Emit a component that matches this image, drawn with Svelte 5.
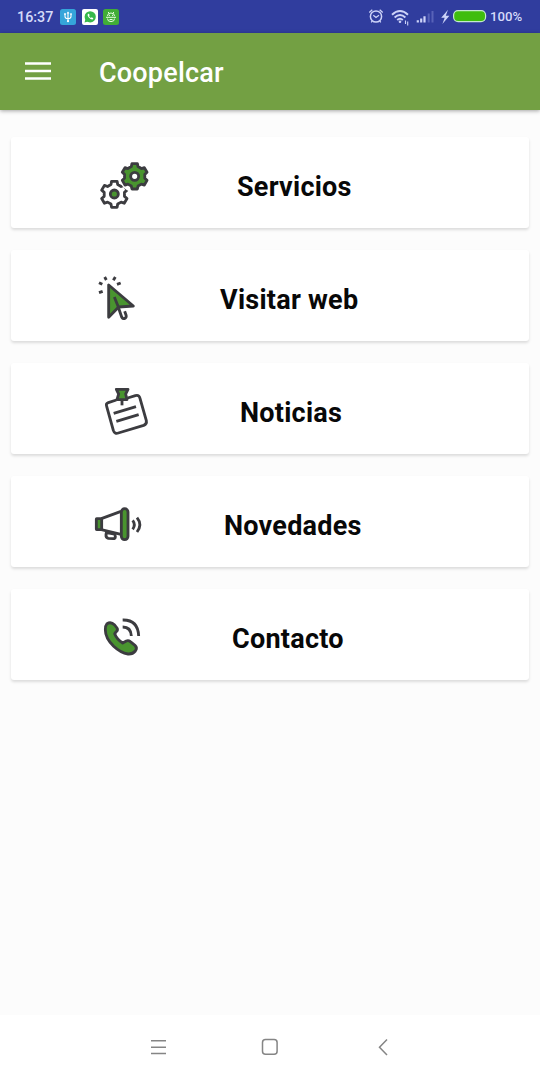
<script lang="ts">
    interface MenuItem {
        icon: string;
        label: string;
        offset: number;
    }

    const items: MenuItem[] = [
        { icon: 'gears', label: 'Servicios', offset: 72 },
        { icon: 'pointer', label: 'Visitar web', offset: 55 },
        { icon: 'note', label: 'Noticias', offset: 75 },
        { icon: 'megaphone', label: 'Novedades', offset: 59 },
        { icon: 'phone', label: 'Contacto', offset: 67 }
    ];

    // Outline of a six-toothed gear around a center point
    function gearPath(cx: number, cy: number, outer: number, inner: number) {
        const points: string[] = [];
        for (let i = 0; i < 6; i++) {
            const mid = i * 60 - 90;
            for (const [r, shift] of [[inner, -19], [outer, -12], [outer, 12], [inner, 19]]) {
                const a = ((mid + shift) * Math.PI) / 180;
                points.push(`${(cx + r * Math.cos(a)).toFixed(1)} ${(cy + r * Math.sin(a)).toFixed(1)}`);
            }
        }
        return `M${points.join('L')}Z`;
    }
</script>

<div class="screen">
    <!-- Status bar -->
    <div class="status">
        <span class="clock">16:37</span>
        <svg class="app" width="16" height="16" viewBox="0 0 16 16">
            <rect width="16" height="16" rx="2.5" fill="#35a5da" />
            <path d="M8 3.5v9M5 5v2.5q0 2 3 2.3M11 5v2.5q0 2-3 2.3" fill="none" stroke="#fff" stroke-width="1.1" />
            <path d="M6.6 4.6 8 2.6l1.4 2z" fill="#fff" />
            <circle cx="8" cy="12.2" r="1.1" fill="#fff" />
            <circle cx="5" cy="5" r=".9" fill="#fff" />
            <path d="M10.2 4.2h1.6v1.6h-1.6z" fill="#fff" />
        </svg>
        <svg class="app" width="16" height="16" viewBox="0 0 16 16">
            <rect width="16" height="16" rx="2" fill="#fff" />
            <circle cx="8.2" cy="7.8" r="5.6" fill="#36b84a" />
            <path d="m2.5 13.5 1-3.6 2.6 2.6z" fill="#36b84a" />
            <path d="M5.8 5q-.7 1.5 1 3.6 2 2.2 3.8 2l.8-1.3-1.7-1-.8.7Q7.7 8.4 7 7l.7-.7-.8-1.6z" fill="#fff" />
        </svg>
        <svg class="app" width="16" height="16" viewBox="0 0 16 16">
            <rect width="16" height="16" rx="2.5" fill="#41ad37" />
            <path d="M4.500 7q0-3 3.500-3t3.500 3M4.500 9.600q0 3 3.500 3t3.500-3M5.200 3l.8 1.300M10.800 3 10 4.300M3 8.300h10M6.500 10.500h3" fill="none" stroke="#e7ffdf" stroke-width="1" />
            <path d="M6 6.300h1M9 6.300h1" stroke="#fff" />
        </svg>
        <svg class="tray" width="120" height="33" viewBox="0 0 120 33" fill="none" stroke="#cdd3f8">
            <circle cx="11" cy="16.5" r="5.6" stroke-width="1.5" />
            <path d="m4.300 12.500 3-2.800M17.700 12.500l-3-2.800M8.300 15.200l2.700 2.200 3-2.200M7.300 21l-1.100 1.300M14.700 21l1.100 1.300" stroke-width="1.3" />
            <path d="M27 14.800q8-7.500 16 0M29.600 17.500q5.400-5 10.800 0M32.200 20q2.800-2.600 5.600 0" stroke-width="1.9" />
            <circle cx="35" cy="21.700" r="1.3" fill="#cdd3f8" stroke="none" />
            <path d="M40.500 20.500v3.500M42.700 21.500v4" stroke-width="1.1" />
            <path d="M52.800 22.500v-2.200M56.200 22.500v-4M59.500 22.500v-6.200" stroke-width="2.2" />
            <path d="M63.700 22.500v-9M67.500 22.500V11" stroke="#5863b8" stroke-width="2" />
            <path d="m83 9.800-6.800 8h3.500l-2.300 6.200 7-8.200h-3.600z" fill="#cdd3f8" stroke="none" />
            <rect x="88.600" y="10.600" width="32" height="11" rx="4.5" fill="#3fbd0d" stroke="#c5e9ce" stroke-width="1.2" />
        </svg>
        <span class="percent">100%</span>
    </div>

    <header>
        <svg width="26" height="18" viewBox="0 0 26 18">
            <path d="M0 1.500h26M0 9h26M0 16.500h26" stroke="#fff" stroke-width="2.6" />
        </svg>
        <h1>Coopelcar</h1>
    </header>

    <main>
        {#each items as item}
            <div class="card">
                {#if item.icon === 'gears'}
                    <svg class="icon" viewBox="0 3 240 210">
                        <path d={gearPath(88, 133, 40, 31)} />
                        <circle class="green" cx="88" cy="132" r="12" />
                        <circle cx="149" cy="79" r="47" fill="#fff" stroke="none" />
                        <path class="green" d={gearPath(149, 79, 39, 31)} />
                        <circle cx="149" cy="79" r="12" fill="#fff" />
                    </svg>
                {:else if item.icon === 'pointer'}
                    <svg class="icon" viewBox="0 -3 240 210">
                        <path class="green" d="M71 60v97l30-31 44-3z" />
                        <path d="m88 96 13 32M101 130l9 26q4 8 11 3 4-3 2-9l-4-11" />
                        <path d="m42 53 10 5M59 36l5 9M91 36l-6 10M107 54l-11 4M42 83l11-4" />
                    </svg>
                {:else if item.icon === 'note'}
                    <svg class="icon" viewBox="0 -3 240 210">
                        <path d="m94 66-24 8q-8 3-5 11l20 72q4 12 15 8l76-23q10-4 8-14l-19-67q-3-11-14-8l-23 7" />
                        <path d="M111 66v16" />
                        <path class="green" d="M94 34h35l-7 14 4 17H96l5-17z" />
                        <path d="m86 106 67-20M94 130l67-20" />
                    </svg>
                {:else if item.icon === 'megaphone'}
                    <svg class="icon" viewBox="0 0 240 210">
                        <path d="m49 86 59-22M49 119l59 14M64 128l-1 6q-1 9 7 11l14 1q7 0 7-6l-2-8z" />
                        <rect class="green" x="34" y="86" width="16" height="33" rx="1" />
                        <rect class="green" x="109" y="56" width="20" height="93" rx="10" />
                        <path d="M143 91q10 13 0 27M156 83q17 21 0 43" />
                    </svg>
                {:else}
                    <svg class="icon" viewBox="0 0 240 210">
                        <path class="green" d="M66 62q12-7 23 4l7 9q4 6-3 12l-4 5q6 16 24 28l11-6q6-3 12 2l14 11q8 7 1 17-8 10-22 9-22-3-43-23-25-25-25-49-1-12 5-19z" />
                        <path d="M113 51q46-1 48 48M113 72q25 0 26 27" />
                    </svg>
                {/if}
                <span class="label" style="margin-left: {item.offset}px">{item.label}</span>
            </div>
        {/each}
    </main>

    <!-- System navigation buttons -->
    <nav>
        <svg width="540" height="65" viewBox="0 0 540 65" fill="none" stroke="#858585" stroke-width="1.5">
            <path d="M151 25.800h15M151 32.300h15M151 38.600h15" />
            <rect x="262.500" y="24.600" width="14.600" height="14.600" rx="3" />
            <path d="m387 24.500-7.500 7.700 7.500 7.800" />
        </svg>
    </nav>
</div>

<style>
    :global(body) {
        margin: 0;
    }

    .screen {
        display: flex;
        flex-direction: column;
        width: 540px;
        height: 1080px;
        background: #fcfcfc;
        font-family: Roboto, sans-serif;
        overflow: hidden;
    }

    /* Status bar */
    .status {
        display: flex;
        align-items: center;
        height: 33px;
        background: #303d9e;
        color: #d5daf9;
        font-weight: 500;
    }

    .clock {
        width: 43px;
        padding-left: 17px;
        font-size: 14.3px;
    }

    .app {
        margin-right: 5.5px;
    }

    .tray {
        margin-left: 240.5px;
        overflow: visible;
    }

    .percent {
        margin-left: 5px;
        font-size: 13.2px;
    }

    /* Title bar */
    header {
        display: flex;
        align-items: center;
        height: 77px;
        padding-left: 25px;
        background: #73a043;
        box-shadow: 0 1px 4px rgba(0, 0, 0, 0.35);
    }

    header svg {
        margin-bottom: 2px;
    }

    h1 {
        margin: 3px 0 0 48px;
        color: #fff;
        font-size: 27px;
        font-weight: 500;
        letter-spacing: 0.2px;
    }

    /* Menu cards */
    main {
        display: flex;
        flex: 1;
        flex-direction: column;
        gap: 22px;
        padding: 27px 11px 0;
    }

    .card {
        display: flex;
        align-items: flex-start;
        height: 91px;
        border-radius: 3px;
        background: #fff;
        box-shadow: 0 2px 3px rgba(0, 0, 0, 0.13);
    }

    .icon {
        width: 80px;
        height: 70px;
        margin: 14px 0 0 74px;
        fill: none;
        stroke: #3c3c40;
        stroke-width: 8.5;
        stroke-linejoin: round;
    }

    .green {
        fill: #49942f;
    }

    .label {
        margin-top: 33px;
        color: #080808;
        font-size: 27px;
        font-weight: 700;
        line-height: 34px;
        letter-spacing: 0.25px;
        white-space: nowrap;
    }

    nav {
        height: 65px;
        background: #fff;
    }
</style>
